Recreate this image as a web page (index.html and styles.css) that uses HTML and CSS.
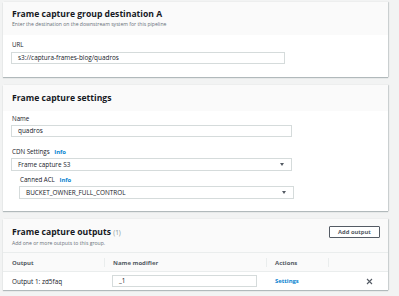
FILE: index.html
```html
<!DOCTYPE html>
<html lang="en">
<head>
    <meta charset="UTF-8">
    <title>Frame capture group</title>
    <link rel="stylesheet" href="styles.css">
</head>
<body>
    <div class="card">
        <div class="card-header">
            <h2>Frame capture group destination A</h2>
            <p class="desc">Enter the destination on the downstream system for this pipeline</p>
        </div>
        <div class="card-body body-url">
            <label>URL</label>
            <div class="field field-url">s3://captura-frames-blog/quadros</div>
        </div>
    </div>

    <div class="card">
        <div class="card-header header-plain">
            <h2>Frame capture settings</h2>
        </div>
        <div class="card-body body-settings">
            <label>Name</label>
            <div class="field field-name">quadros</div>
            <label class="spaced">CDN Settings <a class="info">Info</a></label>
            <div class="field select field-name">Frame capture S3<span class="caret"></span></div>
            <div class="nested">
                <label>Canned ACL <a class="info">Info</a></label>
                <div class="field select field-acl">BUCKET_OWNER_FULL_CONTROL<span class="caret"></span></div>
            </div>
        </div>
    </div>

    <div class="card">
        <div class="card-header header-actions">
            <div>
                <h2>Frame capture outputs <span class="count">(1)</span></h2>
                <p class="desc">Add one or more outputs to this group.</p>
            </div>
            <button class="btn">Add output</button>
        </div>
        <div class="table">
            <div class="th">Output</div>
            <div class="th sep">Name modifier</div>
            <div class="th sep">Actions</div>
            <div class="th sep"></div>
            <div class="td">Output 1: zd5faq</div>
            <div class="td"><div class="field field-mod">_1</div></div>
            <div class="td"><a class="link">Settings</a></div>
            <div class="td remove">
                <svg width="7" height="7" viewBox="0 0 7 7"><path d="M1 1L6 6M6 1L1 6" stroke="#545b64" stroke-width="1.1"/></svg>
            </div>
        </div>
    </div>
</body>
</html>
```

FILE: styles.css
```css
body {
    margin: 0;
    padding: 2px 11px 0 3px;
    background-color: #f2f3f3;
    font-family: "Open Sans", Arial, sans-serif;
    color: #16191f;
    font-size: 6px;
}
.card {
    background-color: #fff;
    box-shadow: 0 1px 1px rgba(0, 28, 36, 0.25), 1px 0 1px rgba(0, 28, 36, 0.12);
    margin-bottom: 8px;
}
.card-header {
    background-color: #fafafa;
    padding: 6px 9px 7px;
}
.card-header h2 {
    margin: 0;
    font-size: 8.6px;
    line-height: 12px;
    font-weight: 700;
}
.desc {
    margin: 0;
    font-size: 5.1px;
    line-height: 8px;
    color: #687078;
}
.header-plain {
    padding: 7px 9px;
    height: 12px;
}
.header-actions {
    display: flex;
    justify-content: space-between;
    align-items: flex-start;
    padding: 7px 8px 5px 9px;
}
.count {
    font-weight: 400;
    font-size: 6.5px;
    color: #879596;
}
.btn {
    margin-top: 0;
    width: 51px;
    height: 12px;
    padding: 0;
    border: 1px solid #545b64;
    border-radius: 1px;
    background-color: #fff;
    font-family: inherit;
    font-size: 5.8px;
    font-weight: 700;
    color: #545b64;
}
.card-body {
    padding: 4px 9px 12px 8px;
}
.body-url {
    padding: 6px 9px 13px 8px;
}
label {
    display: block;
    line-height: 8px;
    height: 8px;
    font-size: 6.2px;
    margin-bottom: 2px;
    margin-left: 1px;
}
.body-url label {
    margin-bottom: 3px;
}
label.spaced {
    margin-top: 11px;
}
.info, .link {
    color: #0a84d0;
    font-weight: 700;
    margin-left: 3px;
    font-size: 5.9px;
}
.link {
    margin-left: 0;
}
.field {
    box-sizing: border-box;
    height: 12px;
    line-height: 10px;
    border: 1px solid #d5dbdb;
    padding: 0 6px;
    font-size: 6.4px;
    position: relative;
}
.field-url {
    width: 274px;
}
.field-name {
    width: 281px;
}
.select {
    height: 13px;
    line-height: 11px;
}
.caret {
    position: absolute;
    right: 7px;
    top: 4px;
    border-left: 2.5px solid transparent;
    border-right: 2.5px solid transparent;
    border-top: 3px solid #545b64;
}
.nested {
    margin-top: 5px;
    padding-left: 8px;
}
.field-acl {
    width: 275px;
}
.table {
    display: grid;
    grid-template-columns: 101px 162px 62px 60px;
}
.th {
    background-color: #fafafa;
    height: 20px;
    line-height: 20px;
    padding-left: 9px;
    font-weight: 700;
    font-size: 6px;
    color: #545b64;
    border-top: 1px solid #eaeded;
    border-bottom: 1px solid #eaeded;
    box-sizing: border-box;
    position: relative;
}
.th.sep::before {
    content: "";
    position: absolute;
    left: 0;
    top: 5px;
    height: 9px;
    border-left: 1px solid #eaeded;
}
.td {
    height: 18px;
    display: flex;
    align-items: center;
    padding-left: 9px;
    font-size: 6.4px;
}
.field-mod {
    width: 145px;
    margin-left: -1px;
}
.remove {
    padding-left: 38px;
}
```
